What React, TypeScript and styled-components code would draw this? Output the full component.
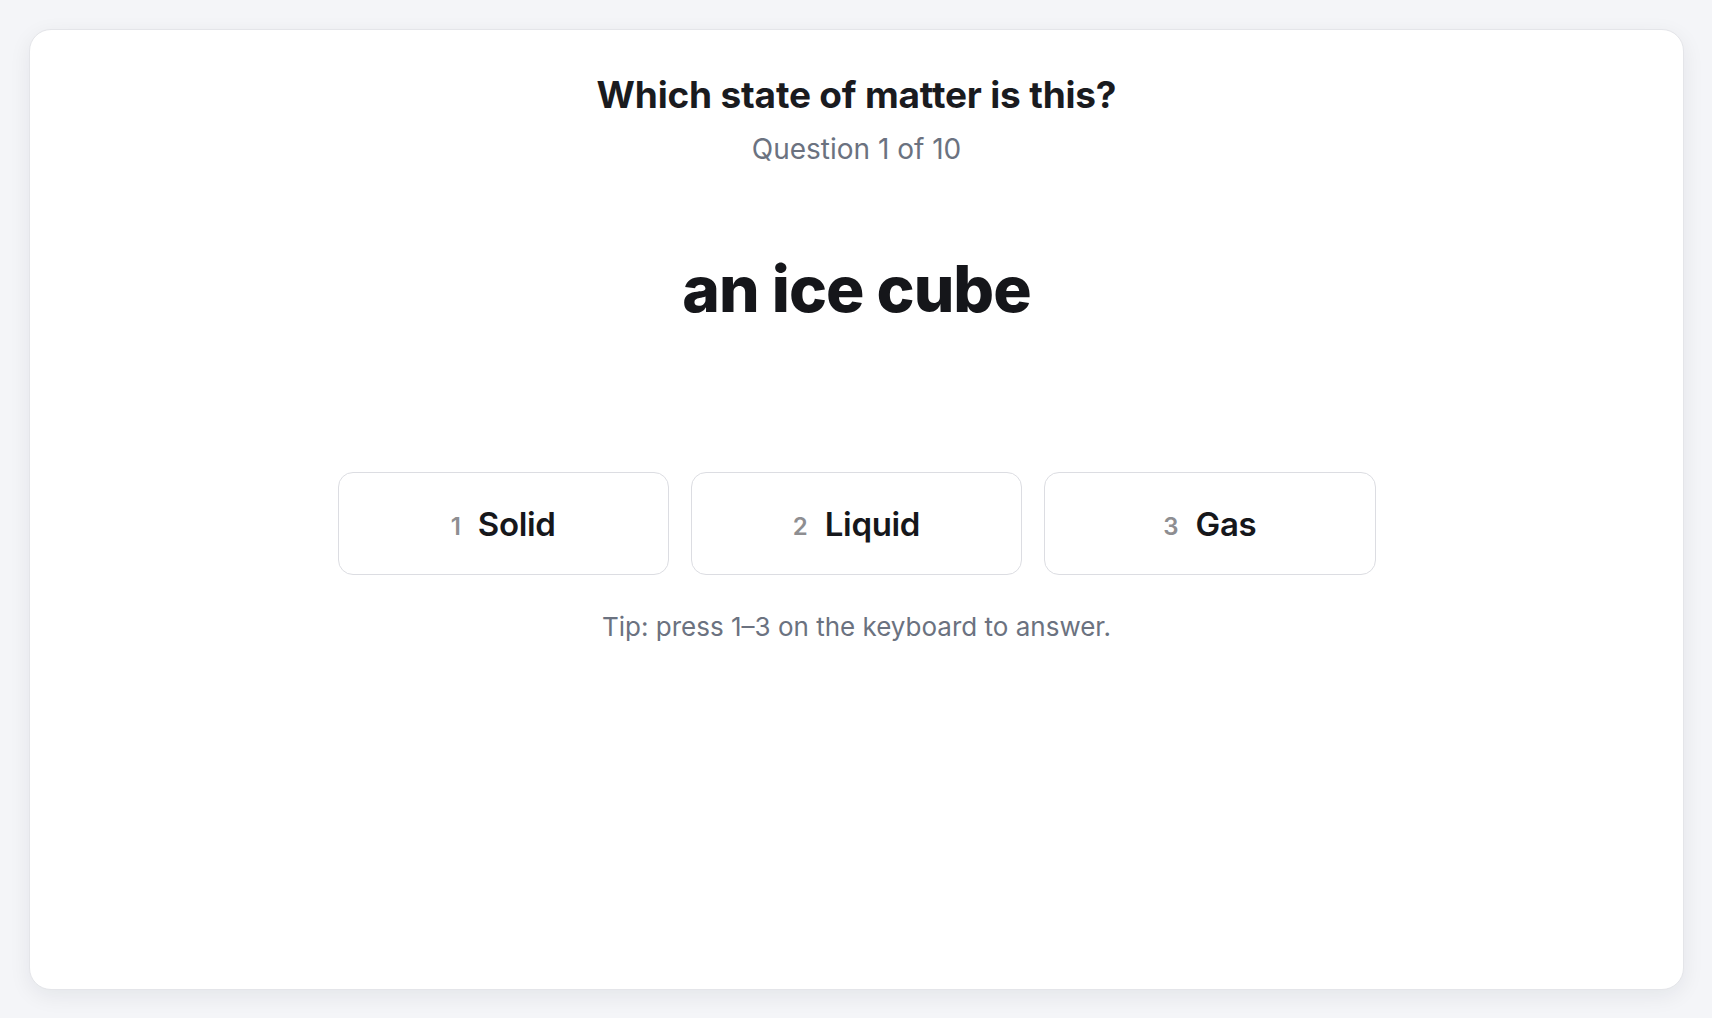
import React from "react";
import styled, { createGlobalStyle } from "styled-components";

const GlobalStyle = createGlobalStyle`
  html, body {
    margin: 0;
    padding: 0;
    background: #f4f5f8;
    font-family: Inter, "Noto Sans", "Liberation Sans", sans-serif;
    -webkit-font-smoothing: antialiased;
  }
  * { box-sizing: border-box; }
`;

const choices = [
  { key: "1", label: "Solid" },
  { key: "2", label: "Liquid" },
  { key: "3", label: "Gas" },
];

const App = () => {
  return (
    <Page>
      <GlobalStyle />
      <Card>
        <Title>Which state of matter is this?</Title>
        <Progress>Question 1 of 10</Progress>
        <Prompt>an ice cube</Prompt>
        <Choices>
          {choices.map((c) => (
            <ChoiceButton key={c.key}>
              <KeyHint>{c.key}</KeyHint>
              <ChoiceLabel>{c.label}</ChoiceLabel>
            </ChoiceButton>
          ))}
        </Choices>
        <Tip>Tip: press 1–3 on the keyboard to answer.</Tip>
      </Card>
    </Page>
  );
};

export default App;

// ****  STYLED COMPONENTS  ****

const Page = styled.div`
  display: flex;
  flex-direction: column;
  height: 100vh;
  padding: 29px 28px 28px 29px;
`;

const Card = styled.div`
  flex: 1;
  display: flex;
  flex-direction: column;
  align-items: center;
  background: #ffffff;
  border: 1px solid #e4e5e9;
  border-radius: 22px;
  box-shadow: 0 6px 22px rgba(20, 24, 40, 0.07);
  padding: 43px 40px;
`;

const Title = styled.h1`
  margin: 0;
  font-size: 37px;
  line-height: 44px;
  font-weight: 700;
  color: #1a1b1f;
  letter-spacing: -0.005em;
`;

const Progress = styled.p`
  margin: 14px 0 0;
  font-size: 28px;
  line-height: 36px;
  font-weight: 400;
  color: #6b7280;
`;

const Prompt = styled.h2`
  margin: 87px 0 0;
  font-size: 64px;
  line-height: 70px;
  font-weight: 800;
  color: #15161a;
  letter-spacing: -0.015em;
`;

const Choices = styled.div`
  display: grid;
  grid-template-columns: repeat(3, 1fr);
  gap: 22px;
  width: 1038px;
  margin-top: 148px;
`;

const ChoiceButton = styled.button`
  display: flex;
  align-items: center;
  justify-content: center;
  gap: 17px;
  height: 103px;
  background: #ffffff;
  border: 1.5px solid #dcdde2;
  border-radius: 15px;
  cursor: pointer;
  font-family: inherit;
  padding: 0 20px;
`;

const KeyHint = styled.span`
  font-size: 24px;
  font-weight: 600;
  color: #8e8e91;
  margin-top: 5px;
`;

const ChoiceLabel = styled.span`
  font-size: 33px;
  font-weight: 600;
  color: #16171b;
  letter-spacing: -0.01em;
`;

const Tip = styled.p`
  margin: 35px 0 0;
  font-size: 26px;
  line-height: 34px;
  color: #6b7280;
`;
